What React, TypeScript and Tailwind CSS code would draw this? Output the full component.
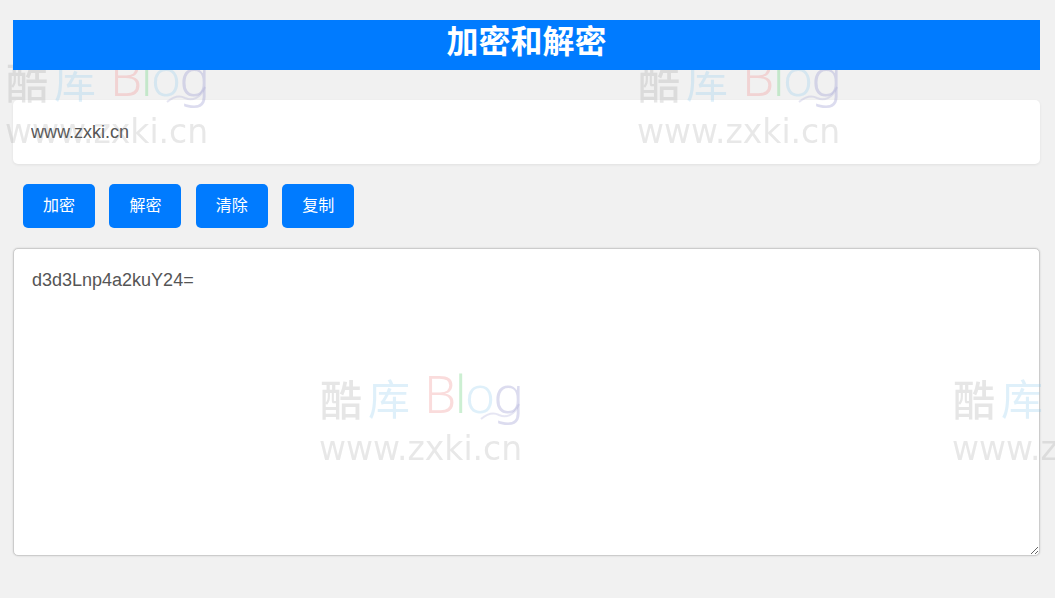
const cjk = "font-['Liberation_Sans','Noto_Sans_CJK_SC',sans-serif]";

function Watermark({ className }: { className: string }) {
  return (
    <div className={`absolute w-[210px] h-[100px] blur-[0.7px] ${className}`}>
      <div className="relative flex items-start h-[62px] leading-none font-['Noto_Sans','Noto_Sans_CJK_SC',sans-serif]">
        <span className="ml-[1px] mt-[8px] w-[48px] text-[42px] leading-[46px] font-medium text-[#9a9a9a]/25">酷</span>
        <span className="mt-[7px] w-[56px] text-[42px] leading-[46px] font-normal text-[#8cc8ee]/28">库</span>
        <div className="flex text-[51px] leading-[48px] font-light tracking-[-1.6px]">
          <span className="text-[#f09a9a]/35">B</span>
          <span className="text-[#8fdc9c]/45">l</span>
          <span className="text-[#8cc8ee]/28">o</span>
          <span className="text-[#9a9ad0]/35">g</span>
        </div>
        <svg className="absolute left-[160px] top-[33px]" width="44" height="22" viewBox="0 0 44 22" fill="none">
          <path d="M2 17 C 8 12, 14 10, 20 13 C 27 16, 35 14, 40 2" stroke="#9a9ad0" strokeOpacity="0.25" strokeWidth="2" />
        </svg>
      </div>
      <div className="-mt-[2px] text-[33px] leading-[40px] font-['DejaVu_Sans',sans-serif] whitespace-nowrap text-[#8a8a8a]/20">www.zxki.cn</div>
    </div>
  );
}

function Btn({ children }: { children: string }) {
  return (
    <button className="w-[72px] h-[44px] rounded-[5px] bg-[#007bff] text-white text-[16px] leading-none">
      {children}
    </button>
  );
}

export default function App() {
  return (
    <div className={`relative h-[598px] overflow-hidden bg-[#f1f1f1] pl-[13px] pt-[20px] pr-[15px] ${cjk}`}>
      <h1 className="relative z-20 h-[50px] bg-[#007bff] text-center text-[32px] leading-[44px] font-bold text-white">
        加密和解密
      </h1>
      <input
        defaultValue="www.zxki.cn"
        className="mt-[30px] block w-full h-[64px] rounded-[5px] bg-white px-[18px] text-[18px] text-[#555] outline-none shadow-[0_1px_3px_rgba(0,0,0,0.07)]"
      />
      <div className="mt-[20px] flex gap-[14.45px] pl-[10px]">
        <Btn>加密</Btn>
        <Btn>解密</Btn>
        <Btn>清除</Btn>
        <Btn>复制</Btn>
      </div>
      <textarea
        defaultValue="d3d3Lnp4a2kuY24="
        className="mt-[20px] block w-full h-[308px] rounded-[5px] border border-[#ccc] bg-white px-[18px] py-[21px] text-[18px] leading-[20px] text-[#555] outline-none shadow-[0_0_2px_rgba(0,0,0,0.15)]"
      />
      <div className="pointer-events-none absolute inset-0 z-10">
        <Watermark className="left-[5px] top-[52px]" />
        <Watermark className="left-[637px] top-[52px]" />
        <Watermark className="left-[319px] top-[369px]" />
        <Watermark className="left-[952px] top-[369px]" />
      </div>
    </div>
  );
}
